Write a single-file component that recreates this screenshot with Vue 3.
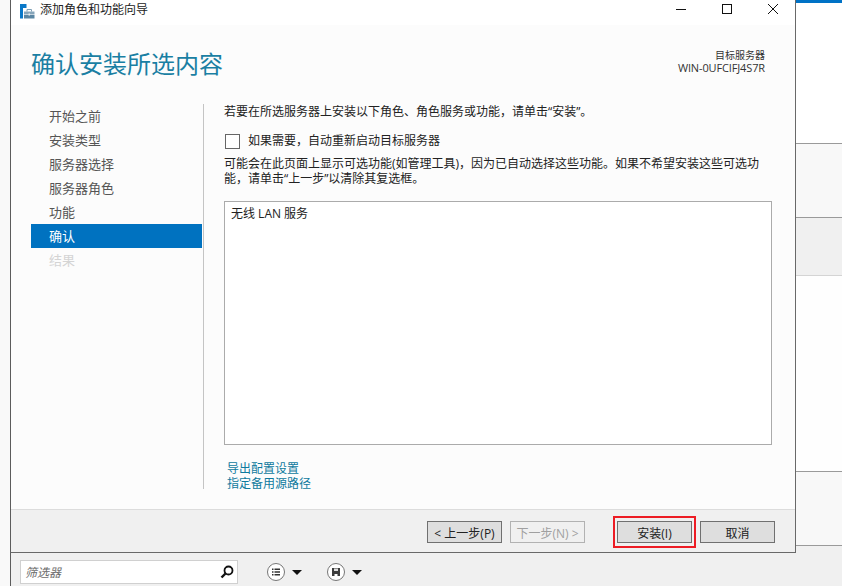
<script setup>
const steps = [
  { label: '开始之前' },
  { label: '安装类型' },
  { label: '服务器选择' },
  { label: '服务器角色' },
  { label: '功能' },
  { label: '确认', active: true },
  { label: '结果', disabled: true },
]
</script>

<template>
  <div class="page">
    <div class="left-strip"></div>

    <div class="center">
      <section class="wizard">
        <header class="titlebar">
          <svg class="app-icon" width="15" height="15" viewBox="0 0 15 15">
            <rect x="0" y="0" width="6.500" height="4" fill="#0a78c8" />
            <rect x="0" y="4" width="3" height="10.500" fill="#0a78c8" />
            <path d="M4 7.500h10.500v3H4z" fill="#86a5ba" />
            <path d="M4 11h10.500v3.500H4z" fill="#5b86a3" />
            <path d="M7 7.500V5.500h4.500v2" fill="none" stroke="#7d9fb5" />
            <rect x="8.500" y="9.500" width="1.500" height="2" fill="#e8eef2" />
          </svg>
          <span class="window-title">添加角色和功能向导</span>
          <div class="window-controls">
            <svg width="12" height="12" viewBox="0 0 12 12"><path d="M1 6.500h10" stroke="#111" fill="none" /></svg>
            <svg width="12" height="12" viewBox="0 0 12 12"><rect x="1.500" y="1.500" width="9" height="9" stroke="#111" fill="none" /></svg>
            <svg width="12" height="12" viewBox="0 0 12 12"><path d="M1 1l10 10M11 1L1 11" stroke="#111" fill="none" /></svg>
          </div>
        </header>

        <div class="heading">
          <h1>确认安装所选内容</h1>
          <div class="target">
            <div class="target-label">目标服务器</div>
            <div class="target-name">WIN-0UFCIFJ4S7R</div>
          </div>
        </div>

        <div class="body">
          <nav class="steps">
            <div
              v-for="step in steps"
              :key="step.label"
              class="step"
              :class="{ 'step--active': step.active, 'step--disabled': step.disabled }"
            >
              {{ step.label }}
            </div>
          </nav>

          <main class="content">
            <p class="intro">若要在所选服务器上安装以下角色、角色服务或功能，请单击“安装”。</p>
            <label class="restart">
              <span class="checkbox"></span>
              <span class="restart-text">如果需要，自动重新启动目标服务器</span>
            </label>
            <p class="note">可能会在此页面上显示可选功能(如管理工具)，因为已自动选择这些功能。如果不希望安装这些可选功能，请单击“上一步”以清除其复选框。</p>
            <div class="summary">无线 LAN 服务</div>
            <div class="links">
              <a>导出配置设置</a>
              <a>指定备用源路径</a>
            </div>
          </main>
        </div>

        <footer class="actions">
          <button class="btn">&lt; 上一步(P)</button>
          <button class="btn btn--disabled">下一步(N) &gt;</button>
          <button class="btn btn--install">
            安装(I)
            <span class="highlight"></span>
          </button>
          <button class="btn">取消</button>
        </footer>
      </section>

      <div class="toolbar">
        <div class="filter">
          <span class="filter-text">筛选器</span>
          <svg width="16" height="16" viewBox="0 0 16 16">
            <circle cx="9.500" cy="6.500" r="4" fill="none" stroke="#111" stroke-width="1.800" />
            <path d="M6.500 9.500L2.500 13.500" stroke="#111" stroke-width="2.400" fill="none" />
          </svg>
        </div>
        <div class="tool tool--list">
          <svg width="20" height="20" viewBox="0 0 20 20">
            <circle cx="10" cy="10" r="8.500" fill="#fff" stroke="#777" />
            <path d="M6 6.500h1.500v1.500H6zM6 9.300h1.500v1.500H6zM6 12h1.500v1.500H6z" fill="#333" />
            <path d="M8.500 6.500H14V8H8.500zM8.500 9.300H14v1.500H8.500zM8.500 12H14v1.500H8.500z" fill="#333" />
          </svg>
          <span class="caret"></span>
        </div>
        <div class="tool tool--save">
          <svg width="20" height="20" viewBox="0 0 20 20">
            <circle cx="10" cy="10" r="8.500" fill="#fff" stroke="#777" />
            <path d="M6 6h8v8H6z" fill="#3c3c3c" />
            <path d="M8 6.500h4v2.500H8z" fill="#ddd" />
            <path d="M8.500 12h3v2h-3z" fill="#fff" />
          </svg>
          <span class="caret"></span>
        </div>
      </div>
    </div>

    <aside class="right-strip">
      <div class="accent"></div>
      <div class="band band--white"></div>
      <div class="band band--light"></div>
      <div class="band band--grey"></div>
      <div class="band band--blank"></div>
      <div class="band band--lower"></div>
      <div class="band band--bottom"></div>
    </aside>
  </div>
</template>

<style>
html,
body {
  margin: 0;
  background: #f0f0f0;
}
</style>

<style scoped>
.page {
  display: flex;
  width: 842px;
  height: 586px;
  overflow: hidden;
  font-family: "Open Sans", "Noto Sans CJK SC", sans-serif;
  font-size: 12px;
  color: #222;
}

.left-strip {
  width: 10px;
  background: #f9f9f9;
}

.center {
  width: 786px;
  display: flex;
  flex-direction: column;
}

.wizard {
  height: 553px;
  box-sizing: border-box;
  display: flex;
  flex-direction: column;
  background: #fcfcfc;
  border-left: 1px solid #5c5c5c;
  border-right: 1px solid #696969;
  border-bottom: 1px solid #696969;
}

.titlebar {
  height: 25px;
  flex: none;
  display: flex;
  align-items: center;
  background: #fff;
  padding-left: 9px;
}

.app-icon {
  margin-right: 5px;
  margin-top: -3px;
}

.window-title {
  margin-top: -5px;
  line-height: 16px;
  color: #222;
}

.window-controls {
  margin-left: auto;
  margin-right: 16px;
  margin-top: -7px;
  display: flex;
  gap: 34px;
}

.heading {
  height: 79px;
  flex: none;
  display: flex;
  justify-content: space-between;
  box-sizing: border-box;
  padding: 21px 30px 0 20px;
}

.heading h1 {
  margin: 0;
  font-size: 24px;
  font-weight: 400;
  line-height: 36px;
  color: #1a7fa3;
}

.target {
  padding-top: 3px;
  text-align: right;
  color: #333;
}

.target-label {
  font-size: 10px;
  line-height: 12px;
}

.target-name {
  font-size: 11px;
  line-height: 13px;
  letter-spacing: -0.13px;
}

.body {
  flex: 1;
  min-height: 0;
  display: flex;
}

.steps {
  width: 171px;
  margin-left: 20px;
  flex: none;
}

.step {
  height: 24px;
  padding-left: 18px;
  font-size: 13px;
  line-height: 24px;
  color: #555;
}

.step--active {
  background: #0072c0;
  color: #fff;
}

.step--disabled {
  color: #d4d4d4;
}

.content {
  margin-left: 1px;
  margin-bottom: 20px;
  width: 568px;
  box-sizing: border-box;
  padding-left: 20px;
  border-left: 1px solid #c4c4c4;
  display: flex;
  flex-direction: column;
}

.intro {
  margin: 0;
  line-height: 16px;
}

.restart {
  margin-top: 13px;
  display: flex;
  align-items: center;
  gap: 8px;
  height: 16px;
  color: #222;
}

.restart-text {
  margin-top: -2px;
}

.checkbox {
  width: 13px;
  height: 13px;
  margin-left: 1px;
  background: #fff;
  border: 1px solid #666;
}

.note {
  margin: 7px 0 0;
  width: 548px;
  line-height: 15px;
}

.summary {
  margin-top: 15px;
  width: 548px;
  height: 244px;
  flex: none;
  box-sizing: border-box;
  padding: 3px 6px;
  line-height: 17px;
  background: #fff;
  border: 1px solid #ababab;
}

.links {
  margin-top: 16px;
  padding-left: 3px;
  display: flex;
  flex-direction: column;
  line-height: 15px;
  color: #0f7a9e;
}

.actions {
  height: 43px;
  flex: none;
  display: flex;
  box-sizing: border-box;
  padding: 11px 0 0 416px;
  background: #f0f0f0;
  border-top: 1px solid #dcdcdc;
}

.btn {
  position: relative;
  width: 75px;
  height: 22px;
  padding: 3px 0 0;
  margin-right: 8px;
  font: inherit;
  line-height: 18px;
  color: #222;
  background: #dedede;
  border: 1px solid #707070;
}

.btn--disabled {
  margin-right: 32px;
  color: #a0a0a0;
  background: #f0f0f0;
  border-color: #b2b2b2;
}

.highlight {
  position: absolute;
  left: -5px;
  right: -5px;
  top: -6px;
  bottom: -6px;
  border: 2px solid #ed1c24;
}

.toolbar {
  flex: 1;
  display: flex;
  align-items: flex-start;
  background: #f0f0f0;
  border-left: 1px solid #5c5c5c;
  padding: 7px 0 0 9px;
}

.filter {
  width: 218px;
  height: 24px;
  box-sizing: border-box;
  display: flex;
  align-items: center;
  justify-content: space-between;
  padding: 0 2px 0 4px;
  background: #fff;
  border: 1px solid #d0d0d0;
}

.filter-text {
  font-style: italic;
  color: #6d6d6d;
}

.tool {
  display: flex;
  align-items: center;
  height: 24px;
  gap: 6px;
}

.tool--list {
  margin-left: 28px;
}

.tool--save {
  margin-left: 24px;
}

.caret {
  width: 0;
  height: 0;
  border-left: 5px solid transparent;
  border-right: 5px solid transparent;
  border-top: 5px solid #111;
}

.right-strip {
  flex: 1;
  display: flex;
  flex-direction: column;
}

.accent {
  height: 3px;
  background: #0072c6;
}

.band {
  box-sizing: border-box;
  border-bottom: 1px solid #9a9a9a;
}

.band--white {
  height: 141px;
  background: #fff;
}

.band--light {
  height: 74px;
  background: #f8f8f8;
}

.band--grey {
  height: 58px;
  background: #f0f0f0;
  border-bottom-color: #d4d4d4;
}

.band--blank {
  height: 196px;
  background: #fefefe;
}

.band--lower {
  height: 74px;
  background: #f8f8f8;
}

.band--bottom {
  flex: 1;
  background: #f0f0f0;
  border-bottom: 0;
}
</style>
